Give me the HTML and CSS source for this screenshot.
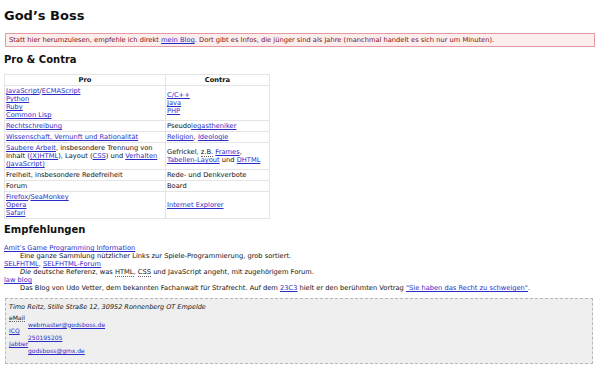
FILE: index.html
```html
<!DOCTYPE html>
<html lang="de">
<head>
    <meta charset="UTF-8">
    <title>God’s Boss</title>
    <link rel="stylesheet" href="styles.css">
</head>
<body>
    <h1>God’s Boss</h1>

    <p class="notice">Statt hier herumzulesen, empfehle ich direkt <a href="#">mein Blog</a>. Dort gibt es Infos, die jünger sind als Jahre (manchmal handelt es sich nur um Minuten).</p>

    <h2>Pro &amp; Contra</h2>
    <table class="procon">
        <thead>
            <tr>
                <th class="pro">Pro</th>
                <th>Contra</th>
            </tr>
        </thead>
        <tbody>
            <tr>
                <td><a href="#">JavaScript</a>/<a href="#">ECMAScript</a><br><a href="#">Python</a><br><a href="#">Ruby</a><br><a href="#">Common Lisp</a></td>
                <td><a href="#">C/C++</a><br><a href="#">Java</a><br><a href="#">PHP</a></td>
            </tr>
            <tr>
                <td><a href="#">Rechtschreibung</a></td>
                <td>Pseudo<a href="#">legastheniker</a></td>
            </tr>
            <tr>
                <td><a href="#">Wissenschaft, Vernunft und Rationalität</a></td>
                <td><a href="#">Religion</a>, <a href="#">Ideologie</a></td>
            </tr>
            <tr>
                <td><a href="#">Saubere Arbeit</a>, insbesondere Trennung von Inhalt (<a href="#">(X)HTML</a>), Layout (<a href="#">CSS</a>) und <a href="#">Verhalten (JavaScript)</a></td>
                <td>Gefrickel, <abbr title="zum Beispiel">z.B.</abbr> <a href="#">Frames</a>, <a href="#">Tabellen-Layout</a> und <a href="#">DHTML</a></td>
            </tr>
            <tr>
                <td>Freiheit, insbesondere Redefreiheit</td>
                <td>Rede- und Denkverbote</td>
            </tr>
            <tr>
                <td>Forum</td>
                <td>Board</td>
            </tr>
            <tr>
                <td><a href="#">Firefox</a>/<a href="#">SeaMonkey</a><br><a href="#">Opera</a><br><a href="#">Safari</a></td>
                <td><a href="#">Internet Explorer</a></td>
            </tr>
        </tbody>
    </table>

    <h2 class="after-table">Empfehlungen</h2>
    <dl class="links">
        <dt><a href="#">Amit’s Game Programming Information</a></dt>
        <dd>Eine ganze Sammlung nützlicher Links zur Spiele-Programmierung, grob sortiert.</dd>
        <dt><a href="#">SELFHTML</a>, <a href="#">SELFHTML-Forum</a></dt>
        <dd><em>Die</em> deutsche Referenz, was <abbr title="Hypertext Markup Language">HTML</abbr>, <abbr title="Cascading Style Sheets">CSS</abbr> und JavaScript angeht, mit zugehörigem Forum.</dd>
        <dt><a href="#">law blog</a></dt>
        <dd>Das Blog von Udo Vetter, dem bekannten Fachanwalt für Strafrecht. Auf dem <a href="#">23C3</a> hielt er den berühmten Vortrag <a href="#">"Sie haben das Recht zu schweigen"</a>.</dd>
    </dl>

    <!-- Contact -->
    <div class="contact">
        <address>Timo Reitz, Stille Straße 12, 30952 Ronnenberg OT Empelde</address>
        <dl>
            <dt><abbr title="electronic Mail">eMail</abbr></dt>
            <dd><a href="#">webmaster@godsboss.de</a></dd>
            <dt><a href="#">ICQ</a></dt>
            <dd><a href="#">250195205</a></dd>
            <dt><a href="#">Jabber</a></dt>
            <dd><a href="#">godsboss@gmx.de</a></dd>
        </dl>
    </div>
</body>
</html>
```

FILE: styles.css
```css
/* General styling */
* {
    margin: 0;
    padding: 0;
    box-sizing: border-box;
}
body {
    font-family: 'DejaVu Sans', sans-serif;
    font-size: 6.7px;
    line-height: 8px;
    color: #111;
    background: #fff;
    padding: 0 4px;
}
a {
    color: #2b2bc8;
}
abbr {
    text-decoration: none;
    border-bottom: 1px dotted #666;
}
h1 {
    font-size: 13px;
    line-height: 16px;
    padding-top: 8px;
    margin-bottom: 9px;
}
h2 {
    font-size: 10px;
    line-height: 12px;
    margin: 7px 0 8px;
}
h2.after-table {
    margin: 5px 0 8px;
}
.notice {
    margin: 0 1px;
    padding: 2px 3px;
    background: #fdeeee;
    border: 1px solid #e49aa0;
    color: #7a1020;
}
/* Pro & Contra table */
.procon {
    width: 266px;
    border-collapse: collapse;
}
.procon th,
.procon td {
    border: 1px solid #e4e4e4;
    padding: 1px 1px;
    text-align: left;
    vertical-align: middle;
}
.procon th {
    text-align: center;
    font-weight: bold;
}
.procon .pro {
    width: 161px;
}
/* Recommendations */
.links dd {
    margin-left: 16px;
}
/* Contact box */
.contact {
    margin: 6px 3px 0 1px;
    padding: 4px 4px 8px 3px;
    background: #efefef;
    border: 1px dashed #b8b8b8;
}
.contact address {
    font-size: 6.5px;
    margin-bottom: 4px;
}
.contact dl {
    font-size: 6px;
    line-height: 6.6px;
}
.contact dd {
    margin-left: 19px;
}
```
